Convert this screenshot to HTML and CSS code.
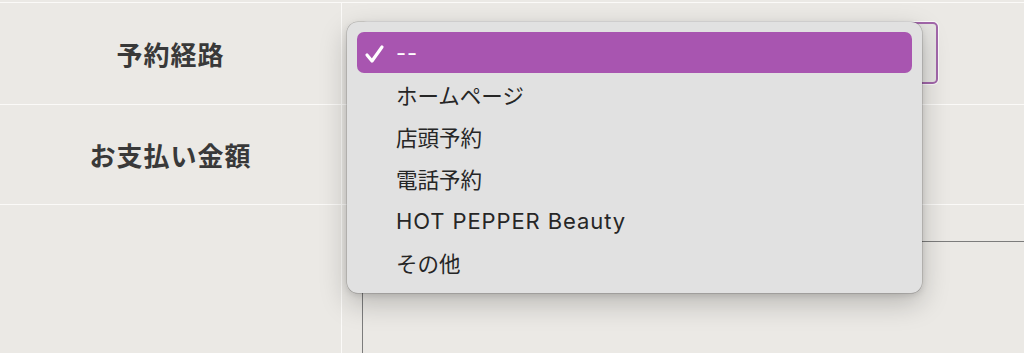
FILE: index.html
```html
<!DOCTYPE html>
<html lang="ja">
<head>
<meta charset="utf-8">
<link rel="stylesheet" href="styles.css">
</head>
<body>
<div class="form">
  <div class="row row-first">
    <div class="label">予約経路</div>
    <div class="field">
      <div class="select"></div>
    </div>
  </div>
  <div class="row row-second">
    <div class="label">お支払い金額</div>
    <div class="field"></div>
  </div>
  <div class="row row-third">
    <div class="label"></div>
    <div class="field field-text">
      <div class="textarea"></div>
    </div>
  </div>
</div>

<div class="menu">
  <div class="item selected">
    <svg class="check" width="22" height="22" viewBox="0 0 22 22"><path d="M3 12 L8 18 L18 4" fill="none" stroke="#fff" stroke-width="3.2" stroke-linecap="round" stroke-linejoin="round"/></svg>
    <span class="en">--</span>
  </div>
  <div class="item"><span class="ja">ホームページ</span></div>
  <div class="item"><span class="ja">店頭予約</span></div>
  <div class="item"><span class="ja">電話予約</span></div>
  <div class="item"><span class="en">HOT PEPPER Beauty</span></div>
  <div class="item"><span class="ja">その他</span></div>
</div>
</body>
</html>
```

FILE: styles.css
```css
html, body {
  margin: 0;
  padding: 0;
  height: 100%;
  background: #ebe9e5;
  overflow: hidden;
}

body {
  font-family: "Noto Sans CJK JP", sans-serif;
  position: relative;
}

.form {
  padding-top: 2px;
}

.row {
  display: grid;
  grid-template-columns: 342px 1fr;
  border-top: 1px solid #fbfaf8;
}

.row-first { height: 101px; }
.row-second { height: 99px; }
.row-third { height: 160px; }

.label {
  border-right: 1px solid #fbfaf8;
  display: flex;
  align-items: center;
  justify-content: center;
  font-size: 26px;
  font-weight: 700;
  letter-spacing: 1px;
  color: #393939;
}

.field {
  padding: 19px 86px 0 20px;
}

.select {
  height: 58px;
  border: 2px solid #a267aa;
  border-radius: 5px;
  background: #e6e5e2;
  box-shadow: 0 0 0 1px #fbfafa;
}

.field-text {
  padding: 36px 0 0 20px;
}

.textarea {
  height: 120px;
  border-top: 1px solid #7c7c7c;
  border-left: 1px solid #7c7c7c;
}

.menu {
  position: absolute;
  left: 347px;
  top: 22px;
  width: 555px;
  padding: 10px 10px 9px;
  background: #e1e1e1;
  border-radius: 11px;
  box-shadow: 0 0 0 0.5px rgba(0,0,0,0.22), 0 10px 28px rgba(0,0,0,0.22), 0 2px 6px rgba(0,0,0,0.12);
  font-family: "Inter", "Noto Sans CJK JP", sans-serif;
  font-size: 22px;
  color: #262626;
}

.item {
  height: 42px;
  display: flex;
  align-items: center;
  padding-left: 39px;
  position: relative;
  border-radius: 7px;
}

.ja {
  position: relative;
  top: -1px;
  font-size: 21.5px;
}

.en {
  letter-spacing: 0.9px;
}

.item.selected {
  height: 41px;
  margin-bottom: 1px;
  background: #a855b0;
  color: #ffffff;
}

.check {
  position: absolute;
  left: 7px;
  top: 11px;
}
```
